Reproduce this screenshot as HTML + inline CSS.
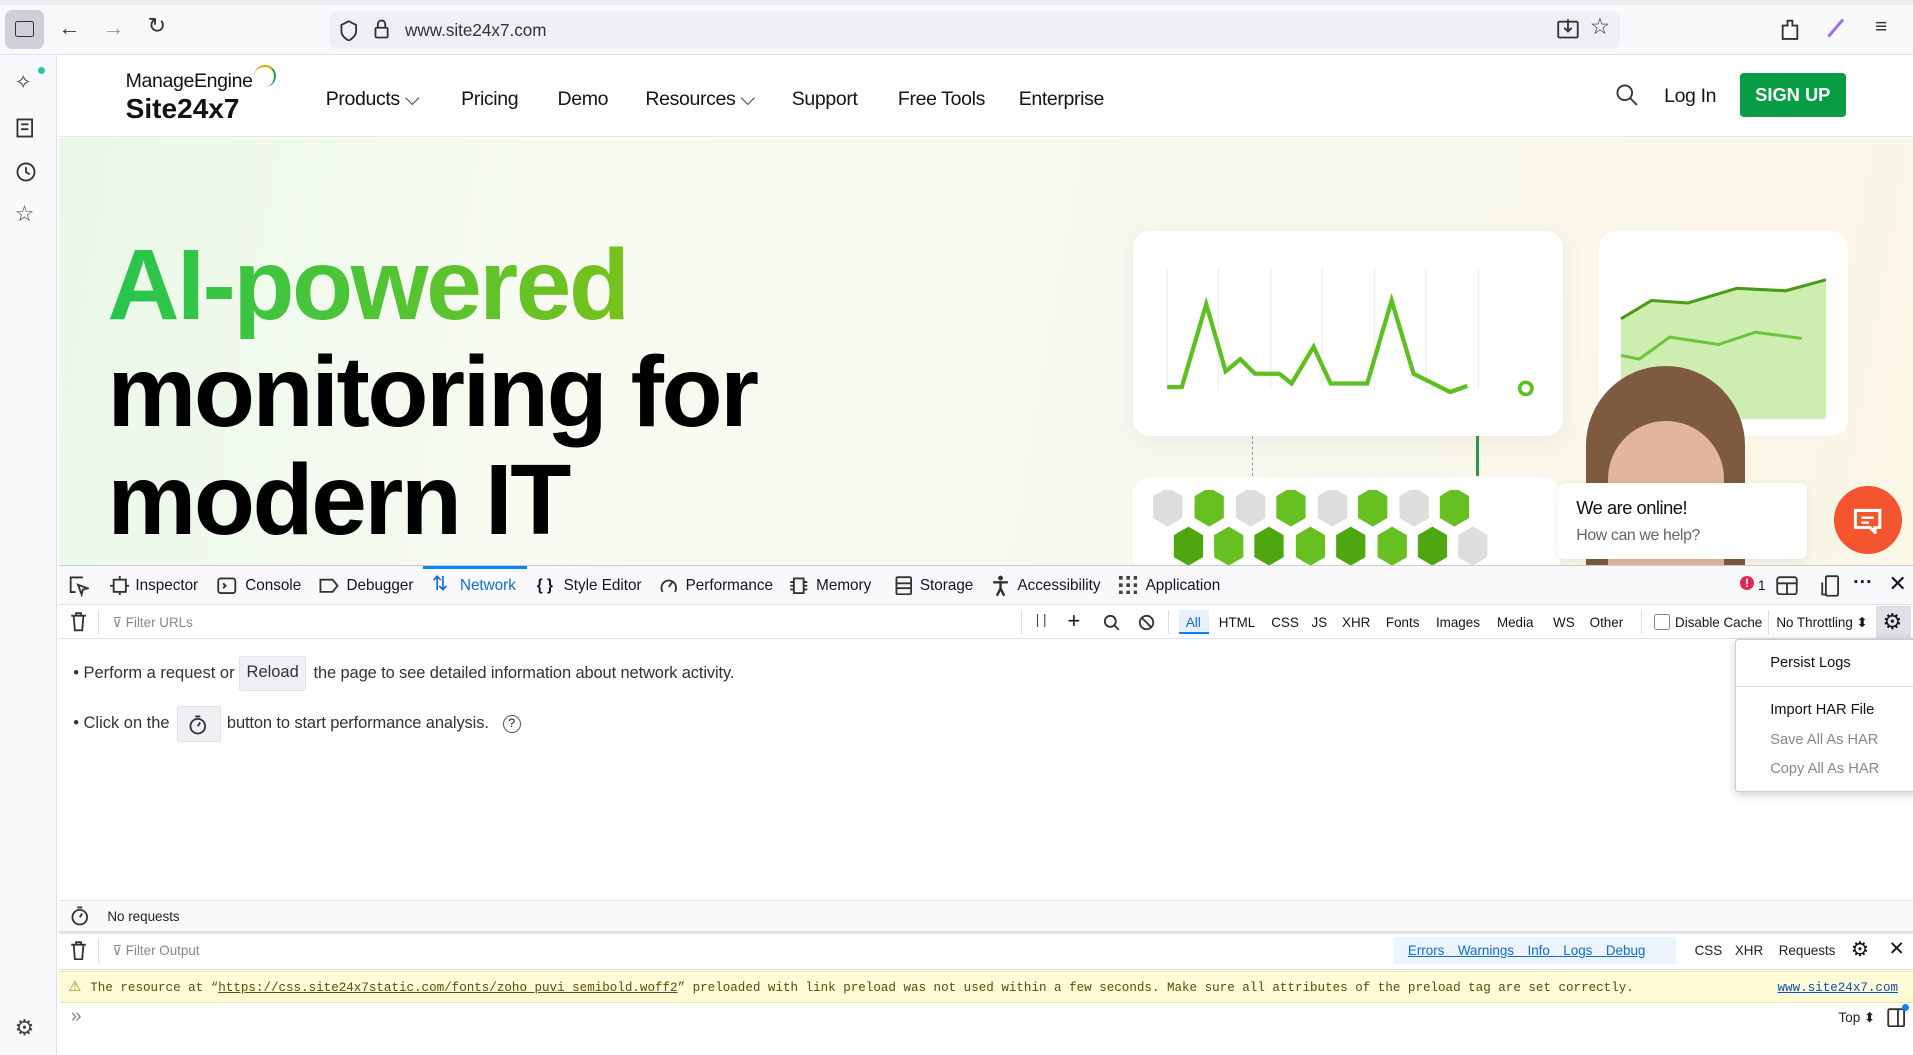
<!DOCTYPE html>
<html><head><meta charset="utf-8">
<style>
html{zoom:1.22}
*{box-sizing:border-box;margin:0;padding:0}
body{width:1568px;height:865px;overflow:hidden;font-family:"Liberation Sans",sans-serif;background:#fff;position:relative;color:#15141a}
.a{position:absolute}
.ic{position:absolute;stroke:#333;fill:none;stroke-width:1.5}
.tab{position:absolute;top:473px;font-size:12.5px;color:#15141a}
.tb{position:absolute;top:504px;font-size:11px;color:#15141a}
</style></head><body>
<div class="a" style="left:0;top:0;width:1568px;height:45px;background:#f9f9fb;border-bottom:1px solid #e0e0e6"></div>
<div class="a" style="left:0;top:0;width:1568px;height:4px;background:#ededf0"></div>
<div class="a" style="left:4px;top:8px;width:32px;height:32px;border-radius:6px;background:#cfcfd8"></div>
<div class="a" style="left:12px;top:17px;width:16px;height:13px;border:1.5px solid #333;border-radius:2px"></div>
<div class="a" style="left:48px;top:12px;font-size:18px;color:#333">←</div>
<div class="a" style="left:84px;top:12px;font-size:18px;color:#999">→</div>
<div class="a" style="left:121px;top:11px;font-size:18px;color:#333">↻</div>
<div class="a" style="left:270px;top:9px;width:1058px;height:31px;border-radius:6px;background:#f0f0f4"></div>
<svg class="ic" style="left:278px;top:16px" width="16" height="18"><path d="M8 1L2 4v5c0 4 3 6 6 8 3-2 6-4 6-8V4z"/></svg>
<svg class="ic" style="left:306px;top:15px" width="14" height="18"><rect x="2" y="8" width="10" height="8" rx="1"/><path d="M4 8V5a3 3 0 0 1 6 0v3"/></svg>
<div class="a" style="left:332px;top:17px;font-size:14px;color:#333">www.site24x7.com</div>
<svg class="ic" style="left:1276px;top:15px" width="18" height="18"><rect x="1" y="3" width="16" height="13" rx="1"/><path d="M9 1v10M6 8l3 3 3-3"/></svg>
<div class="a" style="left:1303px;top:11px;font-size:19px;color:#333">☆</div>
<svg class="ic" style="left:1458px;top:14px" width="18" height="20"><path d="M3 7h4V3h4v4h4v11H3z"/></svg>
<svg class="a" style="left:1497px;top:14px" width="16" height="18"><path d="M2 16L14 2" stroke="#a56cf0" stroke-width="2.5"/></svg>
<div class="a" style="left:1537px;top:12px;font-size:17px;color:#333">≡</div>
<div class="a" style="left:0;top:45px;width:47px;height:820px;background:#f9f9fb;border-right:1px solid #e0e0e6"></div>
<div class="a" style="left:12px;top:57px;font-size:17px;color:#444">✧</div>
<div class="a" style="left:31px;top:55px;width:6px;height:6px;border-radius:3px;background:#2ac3a2"></div>
<svg class="ic" style="left:12px;top:96px" width="18" height="18"><rect x="2" y="2" width="12" height="14"/><path d="M5 6h6M5 10h6"/></svg>
<svg class="ic" style="left:12px;top:132px" width="18" height="18"><circle cx="9" cy="9" r="7"/><path d="M9 5v4l3 2"/></svg>
<div class="a" style="left:12px;top:165px;font-size:18px;color:#444">☆</div>
<div class="a" style="left:12px;top:832px;font-size:18px;color:#444">⚙</div>
<div class="a" style="left:48px;top:45px;width:1520px;height:67px;background:#fff;border-bottom:1px solid #e4e4e4"></div>
<div class="a" style="left:103px;top:57px;font-size:16px;color:#111;letter-spacing:-0.3px">ManageEngine</div>
<div class="a" style="left:103px;top:76px;font-size:23px;font-weight:bold;color:#111">Site24x7</div>
<div class="a" style="left:208px;top:53px;width:18px;height:18px;border-radius:50%;border-top:2px solid #e8a400;border-right:2px solid #2a9d3a"></div>
<div class="a" style="left:267px;top:72px;font-size:16px;color:#111;letter-spacing:-0.3px">Products ⌵</div>
<div class="a" style="left:378px;top:72px;font-size:16px;letter-spacing:-0.3px">Pricing</div>
<div class="a" style="left:457px;top:72px;font-size:16px;letter-spacing:-0.3px">Demo</div>
<div class="a" style="left:529px;top:72px;font-size:16px;letter-spacing:-0.3px">Resources ⌵</div>
<div class="a" style="left:649px;top:72px;font-size:16px;letter-spacing:-0.3px">Support</div>
<div class="a" style="left:736px;top:72px;font-size:16px;letter-spacing:-0.3px">Free Tools</div>
<div class="a" style="left:835px;top:72px;font-size:16px;letter-spacing:-0.3px">Enterprise</div>
<svg class="ic" style="left:1324px;top:68px" width="20" height="20"><circle cx="8" cy="8" r="6"/><path d="M12 12l6 6"/></svg>
<div class="a" style="left:1364px;top:70px;font-size:16px;letter-spacing:-0.3px">Log In</div>
<div class="a" style="left:1426px;top:60px;width:87px;height:36px;background:#089d45;border-radius:3px;color:#fff;font-size:15px;font-weight:bold;text-align:center;line-height:36px">SIGN UP</div>
<div class="a" style="left:48px;top:113px;width:1520px;height:350px;background:linear-gradient(100deg,#eaf8e8 0%,#f7fbf2 25%,#f7f9ef 60%,#fbf6e6 100%)"></div>
<div class="a" style="left:88px;top:190px;font-size:82px;font-weight:bold;letter-spacing:-2px;line-height:88px;color:#4ab82e;background:linear-gradient(90deg,#27c54f,#77c21c);-webkit-background-clip:text;-webkit-text-fill-color:transparent">AI-powered</div>
<div class="a" style="left:88px;top:278px;font-size:82px;font-weight:bold;letter-spacing:-2px;line-height:88px;color:#000;white-space:nowrap">monitoring for<br>modern IT</div>
<div class="a" style="left:929px;top:189px;width:352px;height:168px;background:#fff;border-radius:14px;box-shadow:0 4px 20px rgba(0,0,0,.06)"></div>
<svg class="a" style="left:929px;top:189px" width="352" height="168"><g stroke="#eee"><path d="M28 30v100M70 30v100M113 30v100M155 30v100M198 30v100M240 30v100M283 30v100"/></g><path d="M28 128H40L60 60 76 115l12-10 12 12h20l10 8 18-30 14 30h30l20-68 18 60 30 15 14-5" stroke="#5cc020" stroke-width="3.5" fill="none"/><circle cx="322" cy="129" r="5" fill="#fff" stroke="#5cc020" stroke-width="3"/></svg>
<div class="a" style="left:1311px;top:189px;width:204px;height:168px;background:#fff;border-radius:14px"></div>
<svg class="a" style="left:1311px;top:189px" width="204" height="168"><path d="M18 72l25-15 30 2 40-12 40 2 33-9v114H18z" fill="#cdeeb0"/><path d="M18 72l25-15 30 2 40-12 40 2 33-9" stroke="#4b9a1a" stroke-width="2.5" fill="none"/><path d="M18 102l15 3 25-18 40 6 30-10 38 5" stroke="#6cc53a" stroke-width="2.5" fill="none"/></svg>
<div class="a" style="left:1300px;top:300px;width:130px;height:163px;border-radius:65px 65px 0 0;background:#7d5a40"></div>
<div class="a" style="left:1318px;top:345px;width:95px;height:118px;border-radius:48px 48px 0 0;background:#e2b59c"></div>
<div class="a" style="left:1026px;top:357px;height:33px;border-left:1px dashed #6a9"></div>
<div class="a" style="left:1210px;top:357px;width:2px;height:33px;background:#2a9a4a"></div>
<div class="a" style="left:929px;top:391px;width:350px;height:72px;background:#fff;border-radius:14px 14px 0 0"></div>
<svg class="a" style="left:940px;top:402px" width="340" height="61"><g fill="#ddd"><path d="M5 5l12-7 12 7v18l-12 7-12-7z"/><path d="M73 5l12-7 12 7v18l-12 7-12-7z"/><path d="M140 5l12-7 12 7v18l-12 7-12-7z"/><path d="M207 5l12-7 12 7v18l-12 7-12-7z"/><path d="M255 37l12-7 12 7v18l-12 7-12-7z"/></g><g fill="#66c021"><path d="M39 5l12-7 12 7v18l-12 7-12-7z"/><path d="M106 5l12-7 12 7v18l-12 7-12-7z"/><path d="M173 5l12-7 12 7v18l-12 7-12-7z"/><path d="M240 5l12-7 12 7v18l-12 7-12-7z"/><path d="M55 37l12-7 12 7v18l-12 7-12-7z"/><path d="M122 37l12-7 12 7v18l-12 7-12-7z"/><path d="M189 37l12-7 12 7v18l-12 7-12-7z"/></g><g fill="#4ea710"><path d="M22 37l12-7 12 7v18l-12 7-12-7z"/><path d="M88 37l12-7 12 7v18l-12 7-12-7z"/><path d="M155 37l12-7 12 7v18l-12 7-12-7z"/><path d="M222 37l12-7 12 7v18l-12 7-12-7z"/></g></svg>
<div class="a" style="left:1277px;top:396px;width:204px;height:62px;background:#fff;border-radius:6px;box-shadow:0 2px 8px rgba(0,0,0,.08)"></div>
<div class="a" style="left:1292px;top:407px;font-size:15px;color:#111;letter-spacing:-0.4px">We are online!</div>
<div class="a" style="left:1292px;top:432px;font-size:13px;color:#666;letter-spacing:-0.3px">How can we help?</div>
<div class="a" style="left:1503px;top:398px;width:56px;height:56px;border-radius:50%;background:#f5552e"></div>
<svg class="a" style="left:1519px;top:416px" width="24" height="22"><path d="M2 2h20v14h-4v4l-4-4H2z" fill="none" stroke="#fff" stroke-width="2.5"/><path d="M7 8h10M7 12h6" stroke="#fff" stroke-width="2"/></svg>
<div class="a" style="left:48px;top:463px;width:1520px;height:33px;background:#f9f9fb;border-top:1px solid #ccc;border-bottom:1px solid #e0e0e2"></div>
<div class="a" style="left:347px;top:464px;width:85px;height:2px;background:#0a84ff"></div>
<svg class="ic" style="left:55px;top:471px" width="18" height="18"><path d="M13 2H3v12h4M9 8l8 3-4 1-1 4z"/></svg>
<svg class="ic" style="left:90px;top:472px" width="16" height="16"><rect x="3" y="3" width="10" height="10"/><path d="M8 0v3M8 13v3M0 8h3M13 8h3"/></svg>
<div class="tab" style="left:111px">Inspector</div>
<svg class="ic" style="left:178px;top:472px" width="16" height="16"><rect x="1" y="2" width="14" height="12" rx="2"/><path d="M5 6l2 2-2 2"/></svg>
<div class="tab" style="left:201px">Console</div>
<svg class="ic" style="left:261px;top:472px" width="18" height="16"><path d="M2 3h10l4 5-4 5H2z"/></svg>
<div class="tab" style="left:284px">Debugger</div>
<div class="tab" style="left:354px;top:469px;color:#0a6ee0;font-size:16px">⇅</div>
<div class="tab" style="left:377px;color:#0a6ee0">Network</div>
<div class="tab" style="left:440px;font-weight:bold">{ }</div>
<div class="tab" style="left:462px">Style Editor</div>
<svg class="ic" style="left:540px;top:472px" width="16" height="16"><path d="M3 13A6 6 0 1 1 13 13M8 9l3-4"/></svg>
<div class="tab" style="left:562px">Performance</div>
<svg class="ic" style="left:647px;top:472px" width="16" height="16"><rect x="4" y="2" width="8" height="12"/><path d="M1 5h3M1 8h3M1 11h3M12 5h3M12 8h3M12 11h3"/></svg>
<div class="tab" style="left:669px">Memory</div>
<svg class="ic" style="left:733px;top:472px" width="16" height="16"><rect x="2" y="1" width="12" height="14" rx="1"/><path d="M2 6h12M2 10h12"/></svg>
<div class="tab" style="left:754px">Storage</div>
<svg class="a" style="left:813px;top:471px" width="14" height="18"><circle cx="7" cy="2.5" r="2" fill="#333"/><path d="M1 6h12M7 6v5M7 11l-3 6M7 11l3 6" stroke="#333" stroke-width="2"/></svg>
<div class="tab" style="left:834px">Accessibility</div>
<svg class="a" style="left:917px;top:472px" width="15" height="15" fill="#444"><rect x="0" y="0" width="3" height="3"/><rect x="6" y="0" width="3" height="3"/><rect x="12" y="0" width="3" height="3"/><rect x="0" y="6" width="3" height="3"/><rect x="6" y="6" width="3" height="3"/><rect x="12" y="6" width="3" height="3"/><rect x="0" y="12" width="3" height="3"/><rect x="6" y="12" width="3" height="3"/><rect x="12" y="12" width="3" height="3"/></svg>
<div class="tab" style="left:939px">Application</div>
<div class="a" style="left:1426px;top:472px;width:12px;height:12px;border-radius:6px;background:#e22850;color:#fff;font-size:10px;font-weight:bold;text-align:center;line-height:12px">!</div>
<div class="tab" style="left:1441px;font-size:11px;top:474px">1</div>
<svg class="ic" style="left:1456px;top:472px" width="18" height="16"><rect x="1" y="1" width="16" height="14" rx="2"/><path d="M1 6h16M9 6v9"/></svg>
<svg class="ic" style="left:1493px;top:471px" width="16" height="18"><rect x="4" y="1" width="10" height="16" rx="1"/><path d="M1 6v10h4"/></svg>
<div class="tab" style="left:1519px;top:468px;font-size:16px;font-weight:bold">···</div>
<div class="tab" style="left:1548px;top:468px;font-size:18px">✕</div>
<div class="a" style="left:48px;top:496px;width:1520px;height:28px;border-bottom:1px solid #e0e0e2"></div>
<svg class="ic" style="left:57px;top:502px" width="14" height="16"><path d="M1 3h12M5 3V1h4v2M3 3l1 12h6l1-12"/></svg>
<div class="a" style="left:80px;top:500px;height:20px;border-left:1px solid #ddd"></div>
<div class="tb" style="left:92px;color:#888">⊽ Filter URLs</div>
<div class="a" style="left:837px;top:500px;height:20px;border-left:1px solid #ddd"></div>
<div class="tb" style="left:849px;font-size:11px;top:502px;color:#444">| |</div>
<div class="tb" style="left:875px;font-size:18px;top:498px">+</div>
<svg class="ic" style="left:904px;top:503px" width="14" height="14"><circle cx="6" cy="6" r="4.5"/><path d="M9 9l4 4"/></svg>
<svg class="ic" style="left:933px;top:503px" width="14" height="14"><circle cx="7" cy="7" r="5.5"/><path d="M3 3l8 8"/></svg>
<div class="a" style="left:957px;top:500px;height:20px;border-left:1px solid #ddd"></div>
<div class="a" style="left:966px;top:500px;width:25px;height:20px;background:#e8f0fc;border-bottom:2px solid #0a84ff"></div>
<div class="tb" style="left:972px;color:#0a6ee0">All</div>
<div class="tb" style="left:999px">HTML</div>
<div class="tb" style="left:1042px">CSS</div>
<div class="tb" style="left:1075px">JS</div>
<div class="tb" style="left:1100px">XHR</div>
<div class="tb" style="left:1136px">Fonts</div>
<div class="tb" style="left:1177px">Images</div>
<div class="tb" style="left:1227px">Media</div>
<div class="tb" style="left:1273px">WS</div>
<div class="tb" style="left:1303px">Other</div>
<div class="a" style="left:1345px;top:500px;height:20px;border-left:1px solid #ddd"></div>
<div class="a" style="left:1356px;top:503px;width:13px;height:13px;border:1px solid #888;border-radius:2px"></div>
<div class="tb" style="left:1373px">Disable Cache</div>
<div class="a" style="left:1449px;top:500px;height:20px;border-left:1px solid #ddd"></div>
<div class="tb" style="left:1456px">No Throttling ⬍</div>
<div class="a" style="left:1538px;top:497px;width:28px;height:26px;background:#e0e0e6"></div>
<div class="a" style="left:1543px;top:499px;font-size:18px">⚙</div>
<div class="a" style="left:60px;top:544px;font-size:13.5px;color:#333">• Perform a request or</div>
<div class="a" style="left:196px;top:538px;width:55px;height:28px;background:#f0f0f4;border:1px solid #e0e0e2;border-radius:2px;font-size:13.5px;text-align:center;line-height:26px;color:#333">Reload</div>
<div class="a" style="left:257px;top:544px;font-size:13.5px;color:#333;letter-spacing:-0.1px">the page to see detailed information about network activity.</div>
<div class="a" style="left:60px;top:585px;font-size:13.5px;color:#333">• Click on the</div>
<div class="a" style="left:145px;top:579px;width:36px;height:29px;background:#f0f0f4;border:1px solid #e0e0e2;border-radius:2px"></div>
<svg class="ic" style="left:154px;top:585px" width="17" height="18"><circle cx="8" cy="10" r="6"/><path d="M6 2h4M8 10l2-3"/></svg>
<div class="a" style="left:186px;top:585px;font-size:13.5px;color:#333;letter-spacing:-0.1px">button to start performance analysis.</div>
<div class="a" style="left:412px;top:586px;width:15px;height:15px;border:1.2px solid #555;border-radius:50%;font-size:10px;text-align:center;line-height:13px">?</div>
<div class="a" style="left:1422px;top:524px;width:150px;height:125px;background:#fff;border:1px solid #ccc;box-shadow:0 2px 8px rgba(0,0,0,.2);border-radius:3px"></div>
<div class="a" style="left:1451px;top:537px;font-size:12px;color:#111">Persist Logs</div>
<div class="a" style="left:1423px;top:562px;width:145px;border-top:1px solid #ddd"></div>
<div class="a" style="left:1451px;top:575px;font-size:12px;color:#111">Import HAR File</div>
<div class="a" style="left:1451px;top:600px;font-size:12px;color:#888">Save All As HAR</div>
<div class="a" style="left:1451px;top:624px;font-size:12px;color:#888">Copy All As HAR</div>
<div class="a" style="left:48px;top:738px;width:1520px;height:25px;background:#f9f9fb;border-top:1px solid #e0e0e2"></div>
<svg class="ic" style="left:57px;top:742px" width="16" height="18"><circle cx="8" cy="10" r="6"/><path d="M6 2h4M8 10l2-3"/></svg>
<div class="a" style="left:88px;top:745px;font-size:11px;color:#222">No requests</div>
<div class="a" style="left:48px;top:763px;width:1520px;height:32px;border-top:3px solid #e0e0e2;border-bottom:1px solid #e0e0e2;background:#fff"></div>
<svg class="ic" style="left:57px;top:771px" width="14" height="16"><path d="M1 3h12M5 3V1h4v2M3 3l1 12h6l1-12"/></svg>
<div class="a" style="left:80px;top:769px;height:20px;border-left:1px solid #ddd"></div>
<div class="a" style="left:92px;top:773px;font-size:11px;color:#888">⊽ Filter Output</div>
<div class="a" style="left:1143px;top:768px;width:231px;height:22px;background:#eef4fc"></div>
<div class="a" style="left:1154px;top:773px;font-size:11px;color:#0a6ee0;text-decoration:underline;word-spacing:8px">Errors Warnings Info Logs Debug</div>
<div class="a" style="left:1389px;top:773px;font-size:11px;color:#222">CSS</div>
<div class="a" style="left:1422px;top:773px;font-size:11px;color:#222">XHR</div>
<div class="a" style="left:1458px;top:773px;font-size:11px;color:#222">Requests</div>
<div class="a" style="left:1517px;top:768px;font-size:17px">⚙</div>
<div class="a" style="left:1548px;top:768px;font-size:16px">✕</div>
<div class="a" style="left:48px;top:796px;width:1520px;height:26px;background:#fffbd6;border-top:1px solid #f0e6a0;border-bottom:1px solid #f0e6a0"></div>
<div class="a" style="left:56px;top:802px;font-size:12px;color:#a68a00">⚠</div>
<div class="a" style="left:74px;top:804px;font-family:'Liberation Mono',monospace;font-size:10.3px;color:#5f4b0a;white-space:nowrap">The resource at “<span style="text-decoration:underline">https://css.site24x7static.com/fonts/zoho_puvi_semibold.woff2</span>” preloaded with link preload was not used within a few seconds. Make sure all attributes of the preload tag are set correctly.</div>
<div class="a" style="left:1457px;top:804px;font-family:'Liberation Mono',monospace;font-size:10.3px;color:#0a4fc0;text-decoration:underline">www.site24x7.com</div>
<div class="a" style="left:58px;top:824px;font-size:16px;color:#888">»</div>
<div class="a" style="left:1507px;top:828px;font-size:11px;color:#222">Top ⬍</div>
<svg class="ic" style="left:1547px;top:826px" width="16" height="16"><rect x="1" y="1" width="13" height="14" rx="1"/><path d="M9 1v14"/></svg>
<div class="a" style="left:1559px;top:823px;width:6px;height:6px;border-radius:3px;background:#0a84ff"></div>
</body></html>
